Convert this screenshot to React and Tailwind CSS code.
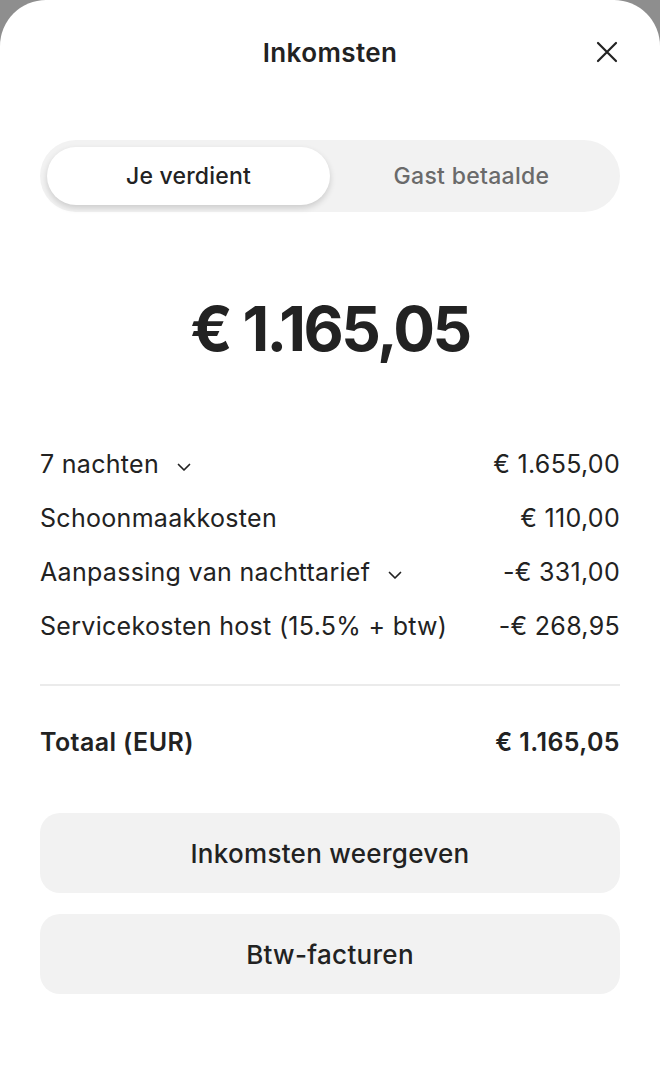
import React, { useState } from "react";

const rows = [
  { label: "7 nachten", value: "€ 1.655,00", chevron: true },
  { label: "Schoonmaakkosten", value: "€ 110,00" },
  { label: "Aanpassing van nachttarief", value: "-€ 331,00", chevron: true },
  { label: "Servicekosten host (15.5% + btw)", value: "-€ 268,95" },
];

const Chevron = () => (
  <svg width="18" height="18" viewBox="0 0 18 18" fill="none" className="ml-4 mt-1">
    <path d="M3.5 6.5l5.5 5.5 5.5-5.5" stroke="#222" strokeWidth="1.7" strokeLinecap="round" strokeLinejoin="round" />
  </svg>
);

const App = () => {
  const [tab, setTab] = useState("earn");
  return (
    <div className="w-[660px] h-[1089px] bg-[#8e8e8e] overflow-hidden" style={{ fontFamily: "Inter, 'Noto Sans', sans-serif" }}>
      <div className="h-full bg-white rounded-t-[46px] flex flex-col px-10 text-[#222]">
        {/* header */}
        <div className="relative flex items-center justify-center h-[52px] mt-[26px]">
          <h1 className="text-[26px] font-semibold tracking-[0.4px]">Inkomsten</h1>
          <button className="absolute right-[2px] top-[15px]">
            <svg width="22" height="22" viewBox="0 0 22 22" fill="none">
              <path d="M2 2l18 18M20 2L2 20" stroke="#222" strokeWidth="2.2" strokeLinecap="round" />
            </svg>
          </button>
        </div>

        {/* tabs */}
        <div className="mt-[62px] h-[72px] bg-[#f2f2f2] rounded-full p-[7px] flex">
          <button
            onClick={() => setTab("earn")}
            className={`flex-1 rounded-full text-[23px] font-medium tracking-[0.2px] ${tab === "earn" ? "bg-white text-[#222] shadow-[0_3px_6px_rgba(0,0,0,0.16)]" : "text-[#6a6a6a]"}`}
          >
            Je verdient
          </button>
          <button
            onClick={() => setTab("guest")}
            className={`flex-1 rounded-full text-[23px] font-medium tracking-[0.3px] ${tab === "guest" ? "bg-white text-[#222] shadow-[0_3px_6px_rgba(0,0,0,0.16)]" : "text-[#6a6a6a]"}`}
          >
            Gast betaalde
          </button>
        </div>

        {/* amount */}
        <div className="mt-[77px] text-center text-[62px] font-bold leading-[80px] tracking-[-2.5px]">
          € 1.165,05
        </div>

        {/* rows */}
        <div className="mt-[69px] flex flex-col">
          {rows.map((r) => (
            <div key={r.label} className="flex items-center justify-between h-[54px] text-[25px] tracking-[0.3px]">
              <div className="flex items-center">
                <span>{r.label}</span>
                {r.chevron && <Chevron />}
              </div>
              <span>{r.value}</span>
            </div>
          ))}
        </div>

        <div className="mt-[30px] h-[2px] bg-[#ebebeb]" />

        <div className="mt-[37px] flex items-center justify-between text-[25px] font-semibold tracking-[0.4px] h-[40px]">
          <span>Totaal (EUR)</span>
          <span>€ 1.165,05</span>
        </div>

        <div className="mt-[50px] flex flex-col gap-[21px]">
          <button className="h-[80px] rounded-[20px] bg-[#f2f2f2] text-[26px] font-medium tracking-[0.3px]">Inkomsten weergeven</button>
          <button className="h-[80px] rounded-[20px] bg-[#f2f2f2] text-[26px] font-medium tracking-[0.3px]">Btw-facturen</button>
        </div>
      </div>
    </div>
  );
};

export default App;
